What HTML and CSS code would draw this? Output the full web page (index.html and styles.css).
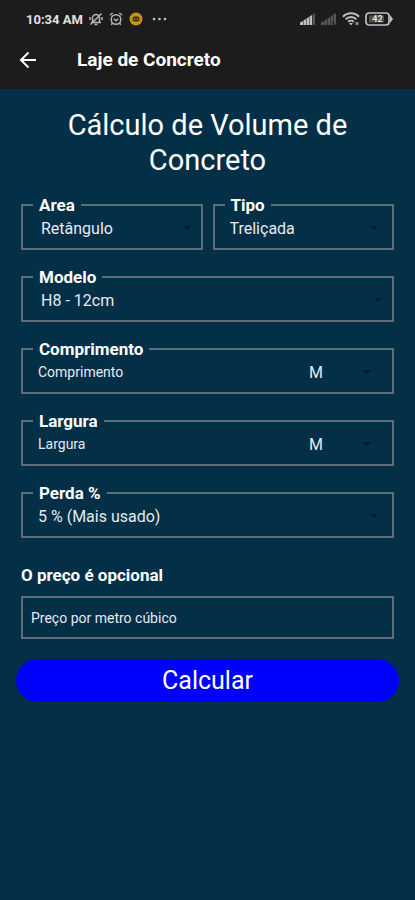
FILE: index.html
```html
<!DOCTYPE html>
<html lang="pt-BR">
<head>
  <meta charset="UTF-8">
  <meta name="viewport" content="width=device-width, initial-scale=1">
  <title>Laje de Concreto</title>
  <link rel="stylesheet" href="styles.css">
</head>
<body>

  <header class="top">
    <div class="status">
      <span class="time">10:34 AM</span>
      <svg class="icon" width="14" height="14" viewBox="0 0 14 14" fill="none" stroke="#b4b4b4" stroke-width="1.5">
        <path d="M3.5 10.5V6a3.5 3.5 0 0 1 7 0v4.5M2 10.5h10M5.5 12.5h3M1.5 12.5l11-11M1 5v3M13 5v3"/>
      </svg>
      <svg class="icon" width="14" height="14" viewBox="0 0 14 14" fill="none" stroke="#b4b4b4" stroke-width="1.5">
        <circle cx="7" cy="7.5" r="4.8"/>
        <path d="M1 3.2l2.6-2.2M13 3.2L10.4 1M4.8 6.8L7 8.8l2.2-2M3.4 11.2l-1.2 1.6M10.6 11.2l1.2 1.6"/>
      </svg>
      <svg class="icon" width="14" height="14" viewBox="0 0 14 14">
        <circle cx="7" cy="7" r="6.5" fill="#c8921e"/>
        <rect x="3.5" y="4.5" width="7" height="5" rx="2" fill="#3a2c10"/>
        <path d="M5.7 6v2M8.3 6v2" stroke="#c8921e"/>
      </svg>
      <svg class="icon dots" width="16" height="14" viewBox="0 0 16 14" fill="#c4c4c4">
        <circle cx="2" cy="7" r="1.3"/><circle cx="7.5" cy="7" r="1.3"/><circle cx="13" cy="7" r="1.3"/>
      </svg>
      <div class="signals">
        <svg width="16" height="12" viewBox="0 0 16 12" fill="#c0c0c0">
          <path d="M0 9.500L3 8v4H0zM3.500 7.500L6 6v6H3.500zM6.500 5.500L9 4v8H6.500zM9.500 3.500L12 2v10H9.500z"/>
          <path d="M12.500 1.500L15 0v12h-2.500z" fill="#555"/>
        </svg>
        <svg width="16" height="12" viewBox="0 0 16 12" fill="#555">
          <path d="M0 9.500L3 8v4H0zM3.500 7.500L6 6v6H3.500zM6.500 5.500L9 4v8H6.500zM9.500 3.500L12 2v6l-1 1 1 3H9.500zM12.500 1.500L15 0v12h-1l-1.500-3z"/>
        </svg>
        <svg width="18" height="14" viewBox="0 0 18 14" fill="none" stroke="#c0c0c0" stroke-width="2">
          <path d="M1 4.8a11 11 0 0 1 16 0M3.6 7.4a7.4 7.4 0 0 1 10.8 0M6.2 9.8a4 4 0 0 1 5.6 0"/>
          <path d="M7 11h4l-2 2.500z" fill="#c0c0c0" stroke="none"/>
          <path d="M13.500 11.500h3" stroke="#888" stroke-width="3"/>
        </svg>
        <svg width="28" height="14" viewBox="0 0 28 14">
          <rect x="1" y="1" width="23" height="12" rx="3" fill="none" stroke="#c0c0c0" stroke-width="1.700"/>
          <rect x="4" y="3.500" width="15" height="7" fill="#505050"/>
          <path d="M25 3l3 4-3 4z" fill="#c0c0c0"/>
          <text class="battery-text" x="12.500" y="10" text-anchor="middle">42</text>
        </svg>
      </div>
    </div>
    <div class="appbar">
      <button class="back" type="button" aria-label="Voltar">
        <svg width="18" height="18" viewBox="0 0 18 18" fill="none" stroke="#fff" stroke-width="2">
          <path d="M17 9H2M9.500 1.500L2 9l7.500 7.500"/>
        </svg>
      </button>
      <span class="appbar-title">Laje de Concreto</span>
    </div>
  </header>

  <main>
    <h1>Cálculo de Volume de Concreto</h1>

    <form>
      <div class="row">
        <fieldset class="field">
          <legend><label for="area">Area</label></legend>
          <div class="control indent">
            <select id="area"><option>Retângulo</option></select>
          </div>
        </fieldset>
        <fieldset class="field">
          <legend><label for="tipo">Tipo</label></legend>
          <div class="control">
            <select id="tipo"><option>Treliçada</option></select>
          </div>
        </fieldset>
      </div>

      <fieldset class="field">
        <legend><label for="modelo">Modelo</label></legend>
        <div class="control indent">
          <select id="modelo"><option>H8 - 12cm</option></select>
        </div>
      </fieldset>

      <fieldset class="field">
        <legend><label for="comprimento">Comprimento</label></legend>
        <div class="control measure">
          <input type="text" id="comprimento" placeholder="Comprimento">
          <select class="unit" aria-label="Unidade do comprimento"><option>M</option></select>
        </div>
      </fieldset>

      <fieldset class="field">
        <legend><label for="largura">Largura</label></legend>
        <div class="control measure">
          <input type="text" id="largura" placeholder="Largura">
          <select class="unit" aria-label="Unidade da largura"><option>M</option></select>
        </div>
      </fieldset>

      <fieldset class="field">
        <legend><label for="perda">Perda %</label></legend>
        <div class="control">
          <select id="perda"><option>5 % (Mais usado)</option></select>
        </div>
      </fieldset>

      <label class="price-label" for="preco">O preço é opcional</label>
      <input class="price" type="text" id="preco" placeholder="Preço por metro cúbico">

      <button class="calc" type="button">Calcular</button>
    </form>
  </main>

</body>
</html>
```
FILE: styles.css
```css
* {
  box-sizing: border-box;
}

body {
  margin: 0;
  min-height: 100vh;
  background: #032f47;
  color: #fff;
  font-family: Roboto, sans-serif;
}

.top {
  background: #1c1c1c;
}

.status {
  display: flex;
  align-items: center;
  gap: 6px;
  height: 38px;
  padding: 0 22px 0 26px;
}

.time {
  font-size: 13px;
  font-weight: 700;
  color: #e0e0e0;
}

.dots {
  margin-left: 3px;
}

.signals {
  display: flex;
  align-items: center;
  gap: 5px;
  margin-left: auto;
}

.battery-text {
  font-size: 9px;
  font-weight: 700;
  fill: #e0e0e0;
}

.appbar {
  display: flex;
  align-items: center;
  height: 51px;
  padding: 0 19px 8px;
}

.back {
  display: flex;
  padding: 0;
  border: 0;
  background: none;
}

.appbar-title {
  margin-left: 40px;
  font-size: 19px;
  font-weight: 700;
}

main {
  padding: 19px 21px;
}

h1 {
  margin: 0 0 18px;
  font-size: 29px;
  font-weight: 400;
  line-height: 35px;
  text-align: center;
}

.row {
  display: flex;
  gap: 10px;
}

.row .field {
  flex: 1;
}

.field {
  min-width: 0;
  margin: 0 0 18px;
  padding: 0 10px 6px;
  border: 2px solid #5c6f7b;
}

legend {
  padding: 0 6px;
  font-size: 17px;
  font-weight: 700;
  line-height: 18px;
}

.control {
  display: flex;
  align-items: center;
  height: 28px;
  padding: 0 4px 0 5px;
}

.indent {
  padding: 0 0 0 8px;
}

.measure {
  padding-right: 11px;
}

/* dropdown arrow */
.control::after {
  content: "";
  border: 4px solid transparent;
  border-top-color: #04182a;
  border-bottom: 0;
}

select,
input {
  min-width: 0;
  margin: 0;
  padding: 0;
  border: 0;
  background: none;
  color: #fff;
  font-family: inherit;
  font-size: 16px;
}

select {
  flex: 1;
  appearance: none;
  color: #e6eaf0;
}

input {
  flex: 1;
  font-size: 14px;
}

input::placeholder {
  color: #e6eaf0;
  opacity: 1;
}

.unit {
  flex: 0 0 54px;
}

.price-label {
  display: block;
  margin: 26px 0 10px;
  font-size: 17px;
  font-weight: 700;
  line-height: 22px;
}

.price {
  display: block;
  width: 100%;
  height: 43px;
  padding: 0 8px;
  border: 2px solid #5c6f7b;
}

.calc {
  display: block;
  width: calc(100% + 10px);
  height: 43px;
  margin: 20px -5px 0;
  border: 0;
  border-radius: 22px;
  background: #0000ff;
  color: #fff;
  font-family: inherit;
  font-size: 25px;
}
```
